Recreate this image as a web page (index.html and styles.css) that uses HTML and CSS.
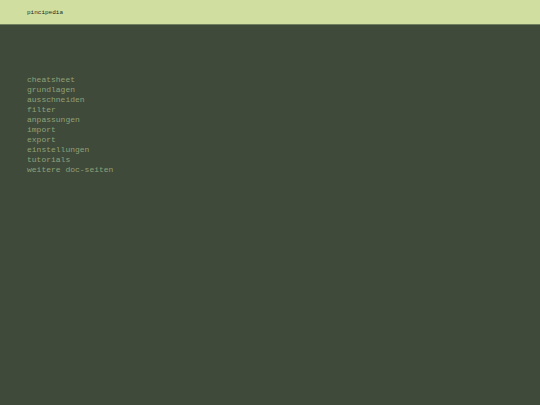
FILE: index.html
```html
<!DOCTYPE html>
<html lang="de">
    <head>
        <meta charset="utf-8">
        <meta name="viewport" content="width=device-width, initial-scale=1">
        <title>pincipedia</title>
        <link rel="stylesheet" href="styles.css">
    </head>
    <body>
        <header class="header">
            <a class="logo" href="#">pincipedia</a>
        </header>
        <nav class="menu">
            <ul>
                <li><a href="#cheatsheet">cheatsheet</a></li>
                <li><a href="#grundlagen">grundlagen</a></li>
                <li><a href="#ausschneiden">ausschneiden</a></li>
                <li><a href="#filter">filter</a></li>
                <li><a href="#anpassungen">anpassungen</a></li>
                <li><a href="#import">import</a></li>
                <li><a href="#export">export</a></li>
                <li><a href="#einstellungen">einstellungen</a></li>
                <li><a href="#tutorials">tutorials</a></li>
                <li><a href="#weitere">weitere doc-seiten</a></li>
            </ul>
        </nav>
    </body>
</html>
```

FILE: styles.css
```css
body {
    margin: 0;
    background-color: #3f4a3a;
    font-family: "Courier New", "Liberation Mono", monospace;
}

a {
    color: inherit;
    text-decoration: none;
}

a:hover {
    text-decoration: underline;
}

.header {
    display: flex;
    align-items: center;
    padding: 9px 27px 7px;
    background-color: #d0dea0;
    border-bottom: 1px solid #71805f;
    color: #1f2a1b;
    font-size: 6px;
    line-height: 8px;
}

.menu {
    padding: 50px 27px;
    color: #8fa077;
    font-size: 8px;
    line-height: 10px;
}

.menu ul {
    margin: 0;
    padding: 0;
    list-style: none;
}
```
